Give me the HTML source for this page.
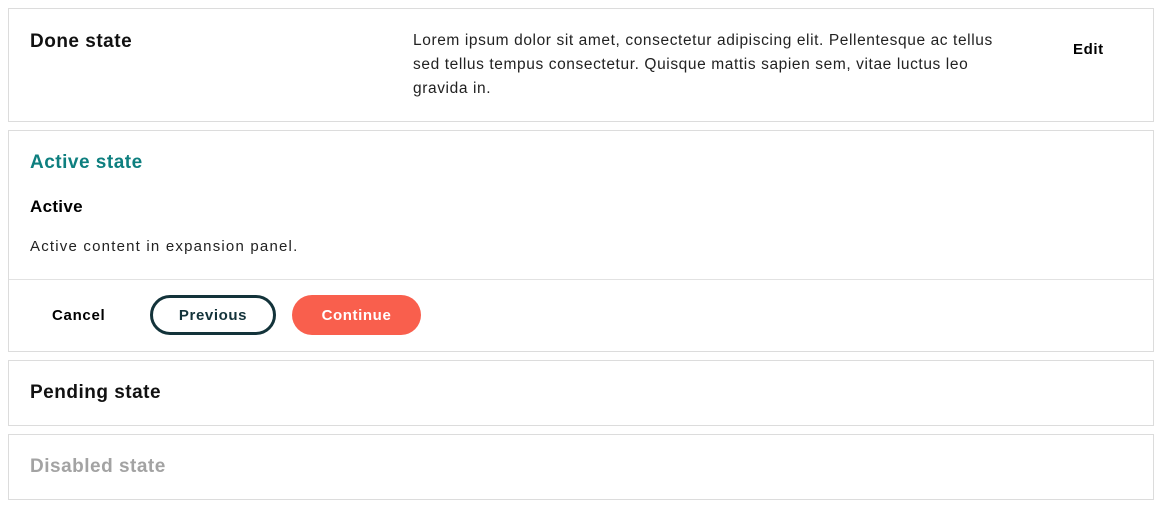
<!DOCTYPE html>
<html><head><style>
*{box-sizing:border-box;margin:0;padding:0}
body{width:1162px;height:516px;background:#fff;font-family:"Liberation Sans",sans-serif;color:#000;position:relative}
.p{position:absolute;left:8px;width:1146px;border:1px solid #dcdcdc;background:#fff}
.a{position:absolute;white-space:nowrap}
.h{font-size:19px;font-weight:bold;letter-spacing:0.5px;color:#111}
.btn{position:absolute;top:295px;height:40px;border-radius:20px;font-size:15px;font-weight:bold;display:flex;align-items:center;justify-content:center;letter-spacing:0.6px}
</style></head><body>
<div class="p" style="top:8px;height:114px"></div>
<div class="a h" style="left:30px;top:31px">Done state</div>
<div class="a" style="left:413px;top:29px;font-size:15.5px;line-height:24px;color:#222;letter-spacing:0.6px">Lorem ipsum dolor sit amet, consectetur adipiscing elit. Pellentesque ac tellus<br>sed tellus tempus consectetur. Quisque mattis sapien sem, vitae luctus leo<br>gravida in.</div>
<div class="a" style="left:1073px;top:41px;font-size:15px;font-weight:bold;letter-spacing:0.6px">Edit</div>

<div class="p" style="top:130px;height:222px"></div>
<div style="position:absolute;left:9px;top:279px;width:1144px;height:1px;background:#e2e2e2"></div>
<div class="a h" style="left:30px;top:152px;color:#0e7f7f">Active state</div>
<div class="a" style="left:30px;top:197px;font-size:17px;font-weight:bold;letter-spacing:0.3px">Active</div>
<div class="a" style="left:30px;top:238px;font-size:15px;color:#222;letter-spacing:1.2px">Active content in expansion panel.</div>
<div class="a" style="left:52px;top:307px;font-size:15px;font-weight:bold;letter-spacing:0.7px">Cancel</div>
<div class="btn" style="left:150px;width:126px;border:3px solid #13333a;color:#13333a">Previous</div>
<div class="btn" style="left:292px;width:129px;background:#f95f4d;color:#fff">Continue</div>

<div class="p" style="top:360px;height:66px"></div>
<div class="a h" style="left:30px;top:382px">Pending state</div>
<div class="p" style="top:434px;height:66px"></div>
<div class="a h" style="left:30px;top:456px;color:#a3a3a3">Disabled state</div>
</body></html>
